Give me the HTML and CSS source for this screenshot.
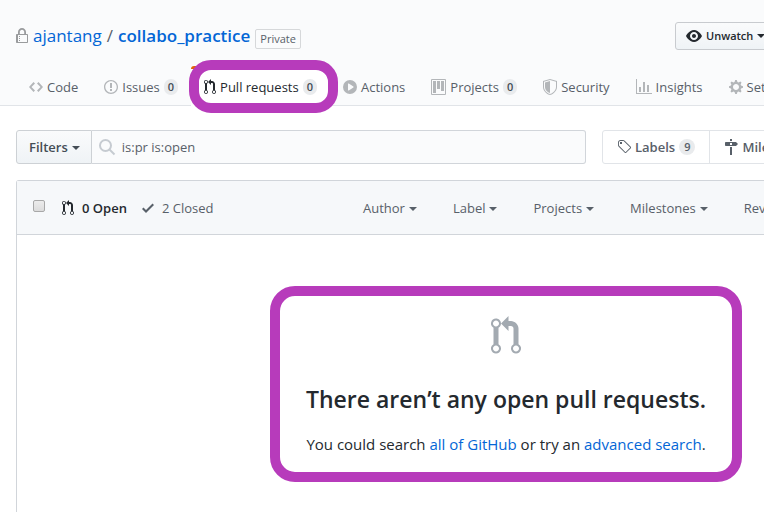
FILE: index.html
```html
<!DOCTYPE html>
<html lang="en">
<head>
<meta charset="utf-8">
<title>Pull requests · ajantang/collabo_practice</title>
<link rel="stylesheet" href="styles.css">
</head>
<body>
<svg class="sprite" aria-hidden="true">
  <symbol id="pr" viewBox="0 0 12 16"><path d="M11 11.28V5c-.03-.78-.34-1.47-.94-2.06C9.46 2.35 8.78 2.03 8 2H7V0L4 3l3 3V4h1c.27.02.48.11.69.31.21.2.3.42.31.69v6.28A1.993 1.993 0 0010 15a1.993 1.993 0 001-3.72zm-1 2.92c-.66 0-1.2-.55-1.2-1.2 0-.65.55-1.2 1.2-1.2.65 0 1.2.55 1.2 1.2 0 .65-.55 1.2-1.2 1.2zM4 3c0-1.11-.89-2-2-2a1.993 1.993 0 00-1 3.72v6.56A1.993 1.993 0 002 15a1.993 1.993 0 001-3.72V4.72c.59-.34 1-.98 1-1.72zm-.8 10c0 .66-.55 1.2-1.2 1.2-.65 0-1.2-.55-1.2-1.2 0-.65.55-1.2 1.2-1.2.65 0 1.2.55 1.2 1.2zM2 4.2C1.34 4.2.8 3.65.8 3c0-.65.55-1.2 1.2-1.2.65 0 1.2.55 1.2 1.2 0 .65-.55 1.2-1.2 1.2z"/></symbol>
</svg>
<header class="repo-head">
  <div class="container title-row">
    <h1 class="repo-title">
      <svg class="lock" width="12" height="16" viewBox="0 0 12 16"><path d="M4 13H3v-1h1v1zm8-6v7c0 .55-.45 1-1 1H1c-.55 0-1-.45-1-1V7c0-.55.45-1 1-1h1V4c0-2.2 1.8-4 4-4s4 1.8 4 4v2h1c.55 0 1 .45 1 1zM3.8 6h4.41V4c0-1.22-.98-2.2-2.2-2.2-1.22 0-2.2.98-2.2 2.2v2H3.8zM11 7H2v7h9V7zM4 8H3v1h1V8zm0 2H3v1h1v-1z"/></svg>
      <a href="#owner">ajantang</a>
      <span class="slash">/</span>
      <a class="repo-name" href="#repo">collabo_practice</a>
      <span class="private">Private</span>
    </h1>
    <div class="actions">
      <button class="btn btn-sm" type="button">
        <svg width="16" height="16" viewBox="0 0 16 16"><path d="M8.06 2C3 2 0 8 0 8s3 6 8.06 6C13 14 16 8 16 8s-3-6-7.94-6zM8 12c-2.2 0-4-1.78-4-4 0-2.2 1.8-4 4-4 2.22 0 4 1.8 4 4 0 2.22-1.78 4-4 4zm2-4c0 1.11-.89 2-2 2-1.11 0-2-.89-2-2 0-1.11.89-2 2-2 1.11 0 2 .89 2 2z"/></svg>
        Unwatch<span class="caret"></span>
      </button>
    </div>
  </div>
  <nav class="container tabs" aria-label="Repository">
    <a class="tab" href="#code"><svg width="14" height="16" viewBox="0 0 14 16"><path d="M9.5 3L8 4.5 11.5 8 8 11.5 9.5 13 14 8 9.5 3zm-5 0L0 8l4.5 5L6 11.5 2.5 8 6 4.5 4.5 3z"/></svg>Code</a>
    <a class="tab" href="#issues"><svg width="14" height="16" viewBox="0 0 14 16"><path d="M7 2.3c3.14 0 5.7 2.56 5.7 5.7s-2.56 5.7-5.7 5.7A5.71 5.71 0 011.3 8c0-3.14 2.56-5.7 5.7-5.7zM7 1C3.14 1 0 4.14 0 8s3.14 7 7 7 7-3.14 7-7-3.14-7-7-7zm1 3H6v5h2V4zm0 6H6v2h2v-2z"/></svg>Issues<span class="counter">0</span></a>
    <a class="tab selected" href="#pulls" aria-current="page"><svg width="12" height="16"><use href="#pr"/></svg>Pull requests<span class="counter">0</span></a>
    <a class="tab" href="#actions"><svg width="14" height="16" viewBox="0 0 14 16"><path d="M14 8A7 7 0 110 8a7 7 0 0114 0zm-8.223 3.482l4.599-3.066a.5.5 0 000-.832L5.777 4.518A.5.5 0 005 4.934v6.132a.5.5 0 00.777.416z" fill-rule="evenodd"/></svg>Actions</a>
    <a class="tab" href="#projects"><svg width="15" height="16" viewBox="0 0 15 16"><path d="M10 12h3V2h-3v10zm-4-2h3V2H6v8zm-4 4h3V2H2v12zm-1 1h13V1H1v14zM14 0H1a1 1 0 00-1 1v14a1 1 0 001 1h13a1 1 0 001-1V1a1 1 0 00-1-1z" fill-rule="evenodd"/></svg>Projects<span class="counter">0</span></a>
    <a class="tab" href="#security"><svg width="14" height="16" viewBox="0 0 14 16"><path d="M0 2l7-2 7 2v6.02C14 12.69 8.69 16 7 16c-1.69 0-7-3.31-7-7.98V2zm1 .75L7 1l6 1.75v5.268C13 12.104 8.449 15 7 15c-1.449 0-6-2.896-6-6.982V2.75zm1 .75L7 2v12c-1.207 0-5-2.482-5-5.985V3.5z" fill-rule="evenodd"/></svg>Security</a>
    <a class="tab" href="#insights"><svg width="16" height="16" viewBox="0 0 16 16"><path d="M16 14v1H0V0h1v14h15zM5 13H3V8h2v5zm4 0H7V3h2v10zm4 0h-2V6h2v7z"/></svg>Insights</a>
    <a class="tab" href="#settings"><svg width="14" height="16" viewBox="0 0 14 16"><path d="M14 8.77v-1.6l-1.94-.64-.45-1.09.88-1.84-1.13-1.13-1.81.91-1.09-.45-.69-1.92h-1.6l-.63 1.94-1.11.45-1.84-.88-1.13 1.13.91 1.81-.45 1.09L0 7.23v1.59l1.94.64.45 1.09-.88 1.84 1.13 1.13 1.81-.91 1.09.45.69 1.92h1.59l.63-1.94 1.11-.45 1.84.88 1.13-1.13-.92-1.81.47-1.09L14 8.75v.02zM7 11c-1.66 0-3-1.34-3-3s1.34-3 3-3 3 1.34 3 3-1.34 3-3 3z"/></svg>Settings</a>
  </nav>
</header>
<main class="container">
  <div class="subnav">
    <form class="search">
      <button class="btn filters" type="button">Filters<span class="caret"></span></button>
      <div class="field">
        <svg width="17" height="17" viewBox="0 0 17 17"><circle cx="6.5" cy="6.5" r="5.5"/><path d="M10.5 10.5L15.5 15.5"/></svg>
        <input type="text" aria-label="Search all pull requests" value="is:pr is:open">
      </div>
    </form>
    <div class="links">
      <a href="#labels"><svg width="14" height="16" viewBox="0 0 14 16"><path d="M7.73 1.73C7.26 1.26 6.62 1 5.96 1H3.5C2.13 1 1 2.13 1 3.5v2.47c0 .66.27 1.3.73 1.77l6.06 6.06c.39.39 1.02.39 1.41 0l4.59-4.59a.996.996 0 000-1.41L7.73 1.73zM2.38 7.09c-.31-.3-.47-.7-.47-1.13V3.5c0-.88.72-1.59 1.59-1.59h2.47c.42 0 .83.16 1.13.47l6.14 6.13-4.73 4.73-6.13-6.15zM3.01 3h2v2H3V3h.01z" fill-rule="evenodd"/></svg>Labels<span class="counter">9</span></a>
      <a href="#milestones"><svg width="14" height="16" viewBox="0 0 14 16"><path d="M8 2H6V0h2v2zm4 5H2c-.55 0-1-.45-1-1V4c0-.55.45-1 1-1h10l2 2-2 2zM8 4H6v2h2V4zM6 16h2V8H6v8z" fill-rule="evenodd"/></svg>Milestones</a>
    </div>
  </div>
  <section class="box">
    <div class="box-head">
      <div class="states">
        <input type="checkbox" aria-label="Select all pull requests">
        <a class="state open" href="#open"><svg width="12" height="16"><use href="#pr"/></svg>0 Open</a>
        <a class="state" href="#closed"><svg width="12" height="16" viewBox="0 0 12 16"><path d="M12 5l-8 8-4-4 1.5-1.5L4 10l6.5-6.5L12 5z"/></svg>2 Closed</a>
      </div>
      <div class="menus">
        <button type="button">Author<span class="caret"></span></button>
        <button type="button">Label<span class="caret"></span></button>
        <button type="button">Projects<span class="caret"></span></button>
        <button type="button">Milestones<span class="caret"></span></button>
        <button type="button">Reviews<span class="caret"></span></button>
      </div>
    </div>
    <div class="blank">
      <div class="highlight">
        <svg width="30" height="40"><use href="#pr"/></svg>
        <h2>There aren’t any open pull requests.</h2>
        <p>You could search <a href="#all">all of GitHub</a> or try an <a href="#advanced">advanced search</a>.</p>
      </div>
    </div>
  </section>
</main>
</body>
</html>
```
FILE: styles.css
```css
* { box-sizing: border-box; }
html { overflow: hidden; }
body {
  margin: 0;
  min-width: 1012px;
  background: #fff;
  color: #24292e;
  font: 13px/20px "Open Sans", "Noto Sans", sans-serif;
}
a { color: #0366d6; text-decoration: none; }
button, input { font: inherit; color: inherit; }
svg { flex: none; fill: currentColor; }
.sprite { position: absolute; width: 0; height: 0; }
.container { width: 980px; margin: 0 16px; }

.repo-head {
  padding-top: 20px;
  background: #fafbfc;
  border-bottom: 1px solid #e1e4e8;
}
.title-row { display: flex; align-items: center; justify-content: space-between; height: 32px; }
.repo-title {
  display: flex;
  align-items: center;
  gap: 5px;
  margin: 0;
  font-size: 17px;
  font-weight: 400;
  line-height: 24px;
}
.lock { color: #999b9d; }
.slash { color: #586069; }
.repo-name { font-weight: 600; }
.private {
  height: 20px;
  margin-top: 5px;
  padding: 0 4px;
  border: 1px solid #d6d8da;
  border-radius: 2px;
  color: #586069;
  font-size: 11px;
  line-height: 18px;
}
.actions { flex: 0 0 321px; }

.btn {
  display: inline-flex;
  align-items: center;
  border: 1px solid #c8cbcf;
  border-radius: 3px;
  background: linear-gradient(#fafbfc, #eff3f6);
  font-weight: 600;
}
.btn-sm { gap: 4px; height: 28px; padding: 0 10px; font-size: 11px; }
.caret {
  display: inline-block;
  margin-left: 4px;
  border: 4px solid transparent;
  border-top-color: currentColor;
  border-bottom: 0;
}
.btn-sm .caret { margin-left: 0; }

.tabs { display: flex; gap: 26px; margin-top: 14px; padding: 0 13px; }
.tab {
  display: flex;
  align-items: center;
  gap: 4px;
  position: relative;
  height: 39px;
  padding-top: 3px;
  color: #586069;
  white-space: nowrap;
}
.tab svg { color: #b3b6b9; }
.counter {
  min-width: 16px;
  padding: 0 5px;
  border-radius: 20px;
  background: #e9ebed;
  color: #586069;
  font-size: 11px;
  font-weight: 600;
  line-height: 16px;
  text-align: center;
}
.tab .counter { min-width: 14px; padding: 0 4px; color: #444d56; }
.selected {
  margin: 0 -13px -1px;
  padding: 0 13px 1px;
  height: 40px;
  border-top: 3px solid #e36209;
  border-radius: 3px 3px 0 0;
  background: #fff;
  color: #24292e;
}
.tab.selected svg { color: #24292e; }
.selected::after {
  content: "";
  position: absolute;
  inset: -9px -8px -7px -2px;
  border: 10px solid #b73bbb;
  border-radius: 22px;
}

.subnav { display: flex; gap: 16px; padding: 24px 0 16px; }
.search { display: flex; flex: 0 0 570px; height: 34px; }
.filters { padding: 0 11px 0 12px; border-radius: 3px 0 0 3px; border-color: #cdd1d5; color: #444d56; }
.filters .caret { margin-top: 2px; }
.field {
  display: flex;
  flex: 1;
  align-items: center;
  gap: 6px;
  padding: 0 7px;
  border: 1px solid #d1d5da;
  border-left: 0;
  border-radius: 0 3px 3px 0;
  background: #fafbfc;
}
.field svg { fill: none; stroke: #c6cbd1; stroke-width: 2; }
.field input { flex: 1; padding: 0; border: 0; background: none; color: #586069; }
.links {
  display: flex;
  height: 34px;
  border: 1px solid #e1e4e8;
  border-radius: 3px;
}
.links a {
  display: flex;
  align-items: center;
  gap: 4px;
  padding: 0 14px;
  color: #586069;
  font-weight: 600;
}
.links a + a { border-left: 1px solid #e1e4e8; }

.box { border: 1px solid #d1d5da; border-bottom: 0; border-radius: 3px 3px 0 0; }
.box-head {
  display: flex;
  align-items: center;
  height: 54px;
  border-bottom: 1px solid #d1d5da;
  background: #f6f8fa;
  color: #586069;
}
.states { display: flex; align-items: center; flex: 0 0 346px; padding-left: 16px; }
.states input {
  appearance: none;
  width: 12px;
  height: 12px;
  margin: 0 17px 4px 0;
  border: 1px solid #a8a8a8;
  border-radius: 2px;
  background: linear-gradient(#ececec, #dcdcdc);
}
.state { display: flex; align-items: center; gap: 8px; margin-right: 15px; color: #586069; }
.open { color: #24292e; font-weight: 600; }
.menus { display: flex; gap: 36px; }
.menus button { display: flex; align-items: center; padding: 0; border: 0; background: none; }
.menus .caret { margin-top: 3px; }

.blank { display: flex; justify-content: center; padding: 51px 0 30px; }
.highlight {
  padding: 20px 26px 16px;
  border: 10px solid #b73bbb;
  border-radius: 25px;
  text-align: center;
}
.highlight svg { display: block; margin: 0 auto; color: #a3aab1; }
h2 { margin: 25px 0 0; font-size: 23px; font-weight: 600; line-height: 36px; }
p { margin: 15px 0 0; font-size: 15px; line-height: 24px; }
```
